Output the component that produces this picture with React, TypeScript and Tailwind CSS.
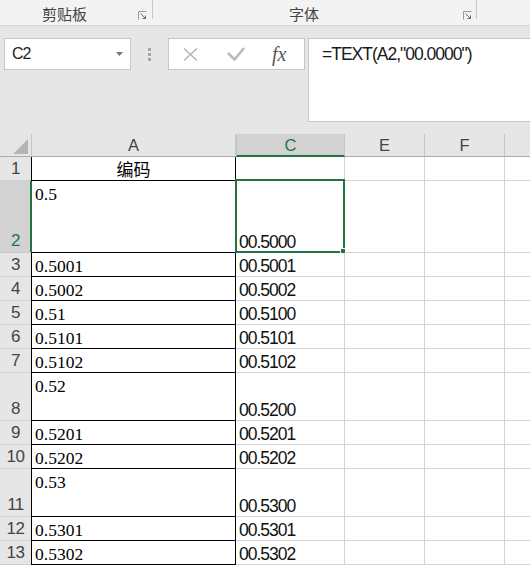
import React from "react";

type Row = { n: number; a: string; c: string; h: "s" | "m" | "l" };

const rows: Row[] = [
  { n: 1, a: "编码", c: "", h: "s" },
  { n: 2, a: "0.5", c: "00.5000", h: "l" },
  { n: 3, a: "0.5001", c: "00.5001", h: "s" },
  { n: 4, a: "0.5002", c: "00.5002", h: "s" },
  { n: 5, a: "0.51", c: "00.5100", h: "s" },
  { n: 6, a: "0.5101", c: "00.5101", h: "s" },
  { n: 7, a: "0.5102", c: "00.5102", h: "s" },
  { n: 8, a: "0.52", c: "00.5200", h: "m" },
  { n: 9, a: "0.5201", c: "00.5201", h: "s" },
  { n: 10, a: "0.5202", c: "00.5202", h: "s" },
  { n: 11, a: "0.53", c: "00.5300", h: "m" },
  { n: 12, a: "0.5301", c: "00.5301", h: "s" },
  { n: 13, a: "0.5302", c: "00.5302", h: "s" },
];

const rowHeight = { s: "h-[24px]", m: "h-[48px]", l: "h-[72px]" };

function Launcher({ className }: { className?: string }) {
  return (
    <svg width="9" height="9" viewBox="0 0 9 9" className={className} fill="none" stroke="#6a6a6a" strokeWidth="1">
      <path d="M0.5 8.5V0.5H8.5" stroke="#9a9a9a" />
      <path d="M2.5 2.5L7.5 7.5" />
      <path d="M7.5 4.5V7.5H4.5" />
    </svg>
  );
}

function Ribbon() {
  return (
    <div className="flex h-[26px] shrink-0 border-b border-[#d5d5d5] bg-[#f3f3f3] font-['Noto_Sans_CJK_SC',sans-serif] text-[15px] leading-[20px] text-[#444]">
      <div className="flex w-[152px]">
        <span className="ml-[42px] mt-[4px]">剪贴板</span>
        <Launcher className="ml-auto mr-[5px] mt-[11px]" />
      </div>
      <div className="h-[19px] w-px bg-[#c8c8c8]" />
      <div className="flex w-[323px]">
        <span className="ml-[136px] mt-[4px]">字体</span>
        <Launcher className="ml-auto mr-[4px] mt-[11px]" />
      </div>
      <div className="h-[19px] w-px bg-[#c8c8c8]" />
    </div>
  );
}

function FormulaBar() {
  return (
    <div className="flex h-[108px] shrink-0 items-start bg-[#e6e6e6] pl-[4px] pt-[12px] font-['Liberation_Sans',sans-serif]">
      {/* name box */}
      <div className="flex h-[32px] w-[127px] shrink-0 items-center border border-[#c6c6c6] bg-white pl-[7px] text-[16px] leading-none tracking-[-1px] text-[#222]">
        <span>C2</span>
        <svg width="7" height="4" viewBox="0 0 7 4" className="ml-auto mr-[7px]">
          <path d="M0 0H7L3.5 4Z" fill="#777" />
        </svg>
      </div>
      <div className="flex h-[32px] w-[37px] shrink-0 flex-col items-center justify-center gap-[2px]">
        <div className="h-[3px] w-[3px] bg-[#a6a6a6]" />
        <div className="h-[3px] w-[3px] bg-[#a6a6a6]" />
        <div className="h-[3px] w-[3px] bg-[#a6a6a6]" />
      </div>
      {/* cancel / enter / fx */}
      <div className="flex h-[32px] w-[137px] shrink-0 items-center border border-[#c6c6c6] bg-white pl-[14px]">
        <svg width="15" height="13" viewBox="0 0 15 13" fill="none" stroke="#b3b3b3" strokeWidth="1.4">
          <path d="M1 0.5L14 12.5M14 0.5L1 12.5" />
        </svg>
        <svg width="18" height="14" viewBox="0 0 18 14" fill="none" stroke="#bababa" strokeWidth="2.6" className="ml-[29px]">
          <path d="M1 6L7.5 12.5L17 1" />
        </svg>
        <span className="ml-[27px] font-['Liberation_Serif',serif] text-[20px] italic leading-none text-[#595959]">
          fx
        </span>
      </div>
      {/* formula input */}
      <div className="ml-[3px] h-[84px] w-[240px] shrink-0 border border-[#c6c6c6] bg-white pl-[13px] pt-[4px] text-[17.5px] leading-[22px] tracking-[-1px] text-[#1a1a1a]">
        =TEXT(A2,"00.0000")
      </div>
    </div>
  );
}

function HeaderRow() {
  return (
    <div className="flex h-[23px] shrink-0 bg-[#e6e6e6] font-['Liberation_Sans',sans-serif] text-[16.5px] leading-none text-[#444]">
      <div className="flex w-[32px] shrink-0 items-end justify-end border-b border-r border-b-[#ababab] border-r-[#c6c6c6] pb-[2px] pr-[3px]">
        <svg width="15" height="15" viewBox="0 0 15 15">
          <path d="M15 0V15H0Z" fill="#b5b5b5" />
        </svg>
      </div>
      <div className="flex w-[204px] shrink-0 items-center justify-center border-b border-r border-b-[#ababab] border-r-[#c6c6c6]">
        A
      </div>
      <div className="flex w-[109px] shrink-0 items-center justify-center border-b-2 border-l border-r border-b-[#217346] border-l-[#c6c6c6] border-r-[#c6c6c6] bg-[#d2d2d2] pt-[1px] text-[#217346]">
        C
      </div>
      <div className="flex w-[80px] shrink-0 items-center justify-center border-b border-r border-b-[#ababab] border-r-[#c6c6c6]">
        E
      </div>
      <div className="flex w-[80px] shrink-0 items-center justify-center border-b border-r border-b-[#ababab] border-r-[#c6c6c6]">
        F
      </div>
      <div className="flex-1 border-b border-b-[#ababab]" />
    </div>
  );
}

function DataRow({ row }: { row: Row }) {
  const selected = row.n === 2;
  return (
    <div className={`flex shrink-0 ${rowHeight[row.h]}`}>
      <div
        className={
          selected
            ? "flex w-[31px] shrink-0 items-end justify-center border-b border-b-[#c8c8c8] bg-[#d2d2d2] pb-[3px] text-[#217346] shadow-[inset_-1px_0_0_#217346]"
            : "flex w-[31px] shrink-0 items-end justify-center border-b border-b-[#cfcfcf] bg-[#e6e6e6] pb-[3px] text-[#444]"
        }
      >
        <span className="font-['Liberation_Sans',sans-serif] text-[17px] leading-none tracking-[-0.5px]">{row.n}</span>
      </div>
      {row.n === 1 ? (
        <div className="flex w-[205px] shrink-0 items-center justify-center border-b border-l border-r border-black pt-[1px] font-['Noto_Sans_CJK_SC',sans-serif] text-[17px] leading-[22px] text-black">
          {row.a}
        </div>
      ) : (
        <div
          className={
            selected
              ? "w-[205px] shrink-0 border-b border-l border-r border-black border-l-[#217346] pl-[3px] pt-[2px] font-['Liberation_Serif',serif] text-[17.5px] leading-[22px] text-black"
              : "w-[205px] shrink-0 border-b border-l border-r border-black pl-[3px] pt-[2px] font-['Liberation_Serif',serif] text-[17.5px] leading-[22px] text-black"
          }
        >
          {row.a}
        </div>
      )}
      <div className="relative flex w-[109px] shrink-0 items-end border-b border-r border-[#d4d4d4] pb-[1px] pl-[3px] font-['Liberation_Sans',sans-serif] text-[17.5px] leading-none tracking-[-1px] text-[#111]">
        {row.c}
        {selected && (
          <div className="absolute -bottom-[1px] -left-[1px] -right-[1px] -top-[2px] border-2 border-[#217346]">
            <div className="absolute -bottom-[3px] -right-[3px] h-[6px] w-[6px] border border-white bg-[#217346]" />
          </div>
        )}
      </div>
      <div className="w-[80px] shrink-0 border-b border-r border-[#d4d4d4]" />
      <div className="w-[80px] shrink-0 border-b border-r border-[#d4d4d4]" />
      <div className="flex-1 border-b border-[#d4d4d4]" />
    </div>
  );
}

export default function App() {
  return (
    <div className="flex h-[565px] w-[530px] flex-col overflow-hidden bg-white">
      <Ribbon />
      <FormulaBar />
      <HeaderRow />
      {rows.map((r) => (
        <DataRow key={r.n} row={r} />
      ))}
    </div>
  );
}
